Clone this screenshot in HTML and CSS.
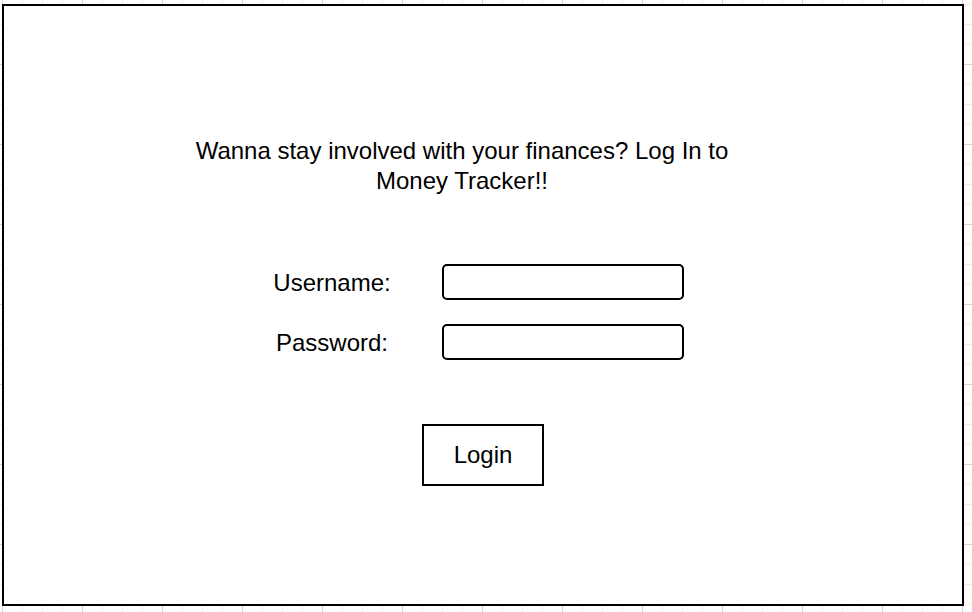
FILE: index.html
```html
<!DOCTYPE html>
<html>
<head>
    <meta charset="utf-8" />
    <title>Money Tracker - Log In</title>
    <link rel="stylesheet" href="styles.css">
</head>
<body>
<div id="frame">
    <div id="intro">
        <p>Wanna stay involved with your finances? Log In to<br>Money Tracker!!</p>
    </div>
    <div id="form">
        <div class="row">
            <label class="label" for="username">Username:</label>
            <input class="field" type="text" id="username" />
        </div>
        <div class="row">
            <label class="label" for="password">Password:</label>
            <input class="field" type="password" id="password" />
        </div>
    </div>
    <div id="actions">
        <button class="login" type="button">Login</button>
    </div>
</div>
</body>
</html>
```

FILE: styles.css
```css
html, body {
    margin: 0;
    height: 100%;
}
body {
    font-family: "Liberation Sans", Arial, sans-serif;
    color: #000;
    background-color: #fff;
    background-image:
        linear-gradient(to right, #d4d4d4 1px, transparent 1px),
        linear-gradient(to bottom, #d4d4d4 1px, transparent 1px),
        linear-gradient(to right, #efefef 1px, transparent 1px),
        linear-gradient(to bottom, #efefef 1px, transparent 1px);
    background-size: 80px 80px, 80px 80px, 20px 20px, 20px 20px;
    background-position: 2px 0, 0 64px, 2px 0, 0 4px;
    overflow: hidden;
}
#frame {
    box-sizing: border-box;
    width: 962px;
    height: 602px;
    margin: 4px 0 0 2px;
    border: 2px solid #000;
    background: #fff;
    display: flex;
    flex-direction: column;
    align-items: flex-start;
}
#intro {
    width: 580px;
    margin: 130px 0 0 168px;
    text-align: center;
}
#intro p {
    margin: 0;
    font-size: 24px;
    line-height: 30px;
}
#form {
    display: flex;
    flex-direction: column;
    gap: 24px;
    margin: 68px 0 0 268px;
}
.row {
    display: flex;
    align-items: center;
    gap: 50px;
}
.label {
    width: 120px;
    padding-top: 2px;
    text-align: center;
    font-size: 24px;
}
.field {
    box-sizing: border-box;
    width: 242px;
    height: 36px;
    margin: 0;
    border: 2px solid #000;
    border-radius: 5px;
    background: #fff;
    outline: none;
}
#actions {
    margin: 64px 0 0 418px;
}
.login {
    box-sizing: border-box;
    width: 122px;
    height: 62px;
    border: 2px solid #000;
    border-radius: 0;
    background: #fff;
    font-family: "Liberation Sans", Arial, sans-serif;
    font-size: 24px;
    color: #000;
    padding: 0;
}
```
